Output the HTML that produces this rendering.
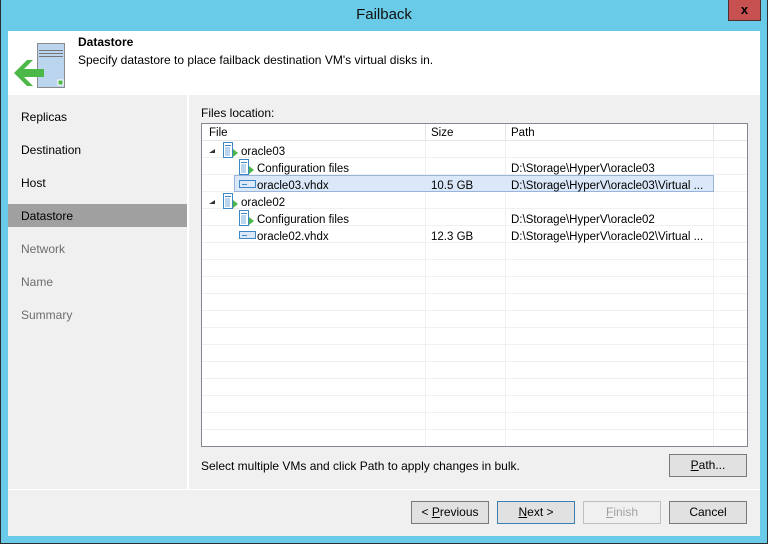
<!DOCTYPE html>
<html><head><meta charset="utf-8"><style>
*{margin:0;padding:0;box-sizing:border-box}
body{width:768px;height:544px;position:relative;overflow:hidden;background:#69cbe8;font-family:"Liberation Sans",sans-serif;font-size:11.5px;color:#000}
.a{position:absolute}
.t{position:absolute;white-space:nowrap}
.btn{position:absolute;width:78px;height:23px;border:1px solid #7a7a7a;background:#e1e1e1;text-align:center;line-height:21px;font-size:12px}
.row{position:absolute;left:0;width:545px;height:17px;border-bottom:1px solid #f0f0f0}
.c{position:absolute;top:3px;white-space:nowrap}
</style></head><body>
<div class="a" style="left:0;top:0;width:768px;height:544px;border:1px solid #2d2d2d;border-top:none"></div>
<div class="t" style="left:0;width:768px;top:6px;text-align:center;font-size:15px;color:#111">Failback</div>
<div class="a" style="left:728px;top:0;width:33px;height:21px;background:#c75050;border:1px solid #4a3030;border-top:none;color:#000;font-weight:bold;text-align:center;line-height:19px;font-size:13px">x</div>
<div class="a" style="left:8px;top:31px;width:752px;height:505px;background:#f0f0f0"></div>
<div class="a" style="left:8px;top:31px;width:752px;height:64px;background:#fff"></div>
<svg class="a" style="left:12px;top:40px" width="56" height="52">
<rect x="25.5" y="3.5" width="27" height="44" fill="#bcd5ee" stroke="#8a8a8a"/>
<rect x="27" y="10" width="24" height="1" fill="#777"/><rect x="27" y="13" width="24" height="1" fill="#777"/><rect x="27" y="16" width="24" height="1" fill="#777"/>
<rect x="46" y="40" width="5" height="5" fill="#4cb848" stroke="#fff"/>
<path d="M2 33 L15 20 L21 20 L12 29 L32 29 L32 37 L12 37 L21 46 L15 46 Z" fill="#4cb848"/>
</svg>
<div class="t" style="left:78px;top:35px;font-weight:bold;font-size:12px">Datastore</div>
<div class="t" style="left:78px;top:53px;font-size:12px">Specify datastore to place failback destination VM's virtual disks in.</div>
<div class="a" style="left:187px;top:95px;width:2px;height:394px;background:#fff"></div>
<div class="a" style="left:8px;top:489px;width:752px;height:1px;background:#fff"></div>
<div class="t" style="left:21px;top:110px;font-size:12px">Replicas</div>
<div class="t" style="left:21px;top:143px;font-size:12px">Destination</div>
<div class="t" style="left:21px;top:176px;font-size:12px">Host</div>
<div class="a" style="left:8px;top:204px;width:179px;height:23px;background:#a0a0a0"></div>
<div class="t" style="left:21px;top:209px;font-size:12px">Datastore</div>
<div class="t" style="left:21px;top:242px;font-size:12px;color:#6d6d6d">Network</div>
<div class="t" style="left:21px;top:275px;font-size:12px;color:#6d6d6d">Name</div>
<div class="t" style="left:21px;top:308px;font-size:12px;color:#6d6d6d">Summary</div>
<div class="t" style="left:201px;top:106px;font-size:12px">Files location:</div>
<div class="a" style="left:201px;top:123px;width:547px;height:324px;border:1px solid #828790;background:#fff;overflow:hidden">
 <div class="a" style="left:0;top:0;width:545px;height:322px;background:repeating-linear-gradient(#fff 0 16px,#f0f0f0 16px 17px)"></div>
 <div class="a" style="left:223px;top:0;width:1px;height:322px;background:#f0f0f0"></div>
 <div class="a" style="left:303px;top:0;width:1px;height:322px;background:#f0f0f0"></div>
 <div class="a" style="left:511px;top:0;width:1px;height:322px;background:#f0f0f0"></div>
 <div class="row" style="top:0;background:#fff;border-bottom:1px solid #e5e5e5">
  <div class="a" style="left:223px;top:0;width:1px;height:17px;background:#e5e5e5"></div>
  <div class="a" style="left:303px;top:0;width:1px;height:17px;background:#e5e5e5"></div>
  <div class="a" style="left:511px;top:0;width:1px;height:17px;background:#e5e5e5"></div>
  <span class="c" style="left:7px">File</span><span class="c" style="left:229px">Size</span><span class="c" style="left:309px">Path</span></div>
 <div class="a" style="left:32px;top:51px;width:480px;height:17px;background:#dbe8f9;border:1px solid #99b4d9"></div>
</div>
<svg class="a" style="left:202px;top:124px" width="540" height="120" font-family="Liberation Sans" font-size="11.5">
<defs>
<g id="srv"><rect x="0.5" y="0.5" width="9" height="15" fill="#fff" stroke="#3f86c4"/><rect x="2" y="3" width="6" height="1" fill="#3f86c4"/><rect x="2" y="5" width="5" height="9" fill="#bcd5ee"/><path d="M10 7 L15 11 L10 15 Z" fill="#4cb848"/></g>
<g id="dsk"><rect x="0.5" y="0.5" width="16" height="7" fill="#dbe8f9" stroke="#3f86c4"/><rect x="3" y="4" width="5" height="1" fill="#3f86c4"/></g>
</defs>
<path d="M13 25 L7 29 L13 29 Z" fill="#333"/><use href="#srv" x="21" y="18"/><text x="39" y="31">oracle03</text>
<use href="#srv" x="37" y="35"/><text x="55" y="48">Configuration files</text>
<use href="#dsk" x="37" y="56"/><text x="55" y="65">oracle03.vhdx</text>
<path d="M13 76 L7 80 L13 80 Z" fill="#333"/><use href="#srv" x="21" y="69"/><text x="39" y="82">oracle02</text>
<use href="#srv" x="37" y="86"/><text x="55" y="99">Configuration files</text>
<use href="#dsk" x="37" y="107"/><text x="55" y="116">oracle02.vhdx</text>
<text x="229" y="65">10.5 GB</text><text x="229" y="116">12.3 GB</text>
<text x="309" y="48">D:\Storage\HyperV\oracle03</text>
<text x="309" y="65">D:\Storage\HyperV\oracle03\Virtual ...</text>
<text x="309" y="99">D:\Storage\HyperV\oracle02</text>
<text x="309" y="116">D:\Storage\HyperV\oracle02\Virtual ...</text>
</svg>
<div class="t" style="left:201px;top:459px;font-size:12px">Select multiple VMs and click Path to apply changes in bulk.</div>
<div class="btn" style="left:669px;top:454px"><u>P</u>ath...</div>
<div class="btn" style="left:411px;top:501px">&lt; <u>P</u>revious</div>
<div class="btn" style="left:497px;top:501px;border-color:#3c7fb1"><u>N</u>ext &gt;</div>
<div class="btn" style="left:583px;top:501px;border-color:#bfbfbf;background:#f0f0f0;color:#a0a0a0"><u>F</u>inish</div>
<div class="btn" style="left:669px;top:501px">Cancel</div>
</body></html>
